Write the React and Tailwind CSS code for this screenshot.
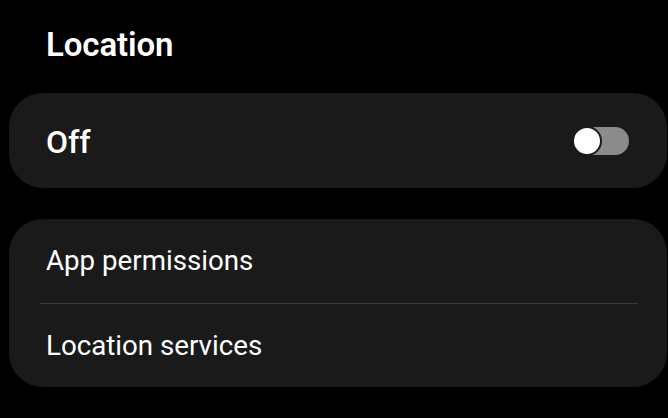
export default function App() {
  return (
    <div
      className="h-[418px] w-[668px] overflow-hidden bg-black pl-[9px] pr-[1px] text-white antialiased"
      style={{ fontFamily: 'Roboto, "Noto Sans", sans-serif' }}
    >
      <div className="mb-[29px] mt-[26px] flex h-[38px] items-center pl-[37px] text-[33px] font-semibold tracking-[-0.1px]">
        Location
      </div>

      <div className="flex h-[95px] items-center justify-between rounded-[34px] bg-[#1a1a1a] pl-[37px] pr-[38px]">
        <span className="pt-[2px] text-[32px] font-medium">Off</span>
        <div className="relative h-[28px] w-[56px]">
          <div className="absolute inset-0 rounded-full bg-[#8b8b8b]" />
          <div className="absolute left-[-1px] top-[-1px] h-[30px] w-[30px] rounded-full border-2 border-[#1a1a1a] bg-white" />
        </div>
      </div>

      <div className="mt-[31px] flex flex-col rounded-[34px] bg-[#1a1a1a]">
        <div className="flex h-[84px] items-center pl-[37px] text-[27.7px]">App permissions</div>
        <div className="ml-[31px] mr-[29px] h-px bg-[#3a3a3a]" />
        <div className="flex h-[83px] items-center pl-[37px] text-[27.7px]">Location services</div>
      </div>
    </div>
  );
}
